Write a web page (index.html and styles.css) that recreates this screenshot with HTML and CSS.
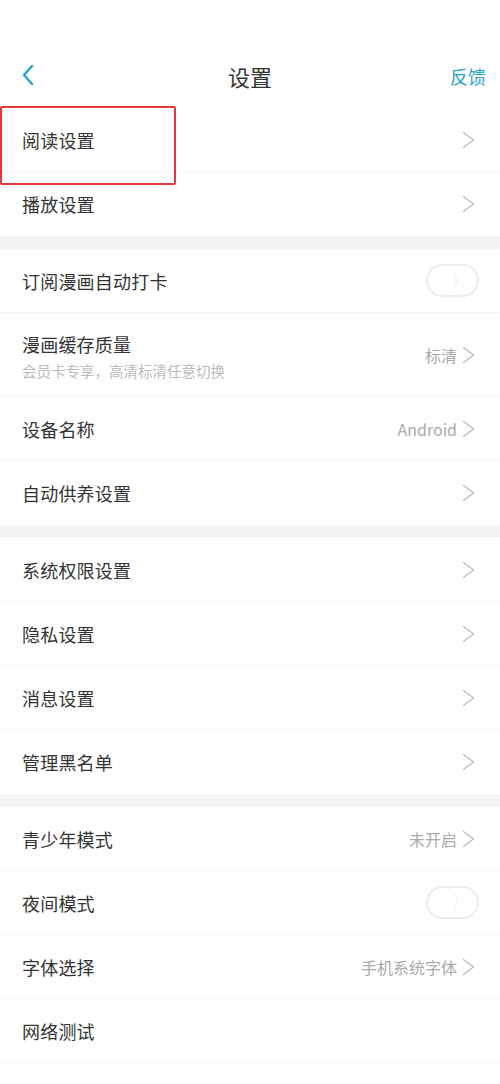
FILE: index.html
```html
<!DOCTYPE html>
<html lang="zh-CN">
<head>
    <meta charset="UTF-8">
    <meta name="viewport" content="width=device-width, initial-scale=1.0">
    <title>设置</title>
    <link rel="stylesheet" href="styles.css">
</head>
<body>
    <div class="page">
        <div class="status-bar"></div>

        <div class="header">
            <svg class="back" width="14" height="22" viewBox="0 0 14 22">
                <path d="M11 2 L3 11 L11 20" fill="none" stroke="#2aa3c4" stroke-width="2.4" stroke-linecap="round" stroke-linejoin="round"/>
            </svg>
            <div class="title">设置</div>
            <div class="feedback">反馈</div>
        </div>

        <div class="section">
            <div class="row">
                <div class="label">阅读设置</div>
                <div class="right"><svg class="arrow" viewBox="0 0 13 18"><path d="M1.5 1.5 L11.5 9 L1.5 16.5"/></svg></div>
                <div class="mark"></div>
            </div>
            <div class="row">
                <div class="label">播放设置</div>
                <div class="right"><svg class="arrow" viewBox="0 0 13 18"><path d="M1.5 1.5 L11.5 9 L1.5 16.5"/></svg></div>
            </div>
        </div>

        <div class="gap"></div>

        <div class="section">
            <div class="row">
                <div class="label">订阅漫画自动打卡</div>
                <div class="switch"><span class="knob"></span></div>
            </div>
            <div class="row tall">
                <div class="text">
                    <div class="label">漫画缓存质量</div>
                    <div class="sub">会员卡专享，高清标清任意切换</div>
                </div>
                <div class="right"><span class="value">标清</span><svg class="arrow" viewBox="0 0 13 18"><path d="M1.5 1.5 L11.5 9 L1.5 16.5"/></svg></div>
            </div>
            <div class="row">
                <div class="label">设备名称</div>
                <div class="right"><span class="value">Android</span><svg class="arrow" viewBox="0 0 13 18"><path d="M1.5 1.5 L11.5 9 L1.5 16.5"/></svg></div>
            </div>
            <div class="row">
                <div class="label">自动供养设置</div>
                <div class="right"><svg class="arrow" viewBox="0 0 13 18"><path d="M1.5 1.5 L11.5 9 L1.5 16.5"/></svg></div>
            </div>
        </div>

        <div class="gap"></div>

        <div class="section">
            <div class="row">
                <div class="label">系统权限设置</div>
                <div class="right"><svg class="arrow" viewBox="0 0 13 18"><path d="M1.5 1.5 L11.5 9 L1.5 16.5"/></svg></div>
            </div>
            <div class="row">
                <div class="label">隐私设置</div>
                <div class="right"><svg class="arrow" viewBox="0 0 13 18"><path d="M1.5 1.5 L11.5 9 L1.5 16.5"/></svg></div>
            </div>
            <div class="row">
                <div class="label">消息设置</div>
                <div class="right"><svg class="arrow" viewBox="0 0 13 18"><path d="M1.5 1.5 L11.5 9 L1.5 16.5"/></svg></div>
            </div>
            <div class="row">
                <div class="label">管理黑名单</div>
                <div class="right"><svg class="arrow" viewBox="0 0 13 18"><path d="M1.5 1.5 L11.5 9 L1.5 16.5"/></svg></div>
            </div>
        </div>

        <div class="gap"></div>

        <div class="section">
            <div class="row">
                <div class="label">青少年模式</div>
                <div class="right"><span class="value">未开启</span><svg class="arrow" viewBox="0 0 13 18"><path d="M1.5 1.5 L11.5 9 L1.5 16.5"/></svg></div>
            </div>
            <div class="row">
                <div class="label">夜间模式</div>
                <div class="switch"><span class="knob"></span></div>
            </div>
            <div class="row">
                <div class="label">字体选择</div>
                <div class="right"><span class="value">手机系统字体</span><svg class="arrow" viewBox="0 0 13 18"><path d="M1.5 1.5 L11.5 9 L1.5 16.5"/></svg></div>
            </div>
            <div class="row last">
                <div class="label">网络测试</div>
            </div>
        </div>
    </div>
</body>
</html>
```

FILE: styles.css
```css
body {
    margin: 0;
    background: #fff;
    font-family: "Noto Sans CJK SC", "Noto Sans", sans-serif;
    color: #333;
}
.page {
    width: 500px;
}
.status-bar {
    height: 44px;
}
.header {
    height: 64px;
    display: flex;
    align-items: center;
    justify-content: space-between;
    padding: 0 14px 0 21px;
    position: relative;
}
.back {
    display: block;
    margin-top: -2px;
}
.title {
    position: absolute;
    left: 0;
    right: 0;
    text-align: center;
    font-size: 22px;
    color: #333;
    pointer-events: none;
}
.feedback {
    font-size: 18px;
    color: #2aa3c4;
}
.gap {
    height: 13px;
    background: #f4f4f4;
}
.row {
    height: 64px;
    display: flex;
    align-items: center;
    justify-content: space-between;
    padding: 0 25px 0 22px;
    border-bottom: 1px solid #f5f5f5;
    box-sizing: border-box;
    position: relative;
}
.row:last-child {
    border-bottom: none;
}
.row.tall {
    height: 84px;
}
.row.last {
    border-bottom: 1px solid #f6f6f6;
}
.label {
    font-size: 18px;
    color: #333;
    letter-spacing: 0.2px;
}
.text .label {
    margin-top: 2px;
}
.sub {
    font-size: 14.5px;
    color: #bbb;
    margin-top: 3px;
}
.right {
    display: flex;
    align-items: center;
    gap: 5px;
}
.value {
    font-size: 16px;
    color: #aaa;
}
.arrow {
    display: block;
    width: 13px;
    height: 18px;
}
.arrow path {
    fill: none;
    stroke: #bbb;
    stroke-width: 1.4;
    stroke-linecap: round;
    stroke-linejoin: round;
}
.switch {
    width: 53px;
    height: 33px;
    border: 2px solid #ececec;
    border-radius: 18px;
    margin-right: -4px;
    position: relative;
    box-sizing: border-box;
}
.knob {
    position: absolute;
    left: 0;
    top: 0;
    width: 29px;
    height: 29px;
    border-radius: 50%;
    border-right: 1.5px solid #f0f0f0;
    box-sizing: border-box;
}
.mark {
    position: absolute;
    left: 0;
    top: -2px;
    width: 176px;
    height: 79px;
    border: 2px solid #e23b3b;
    border-radius: 2px;
    box-sizing: border-box;
}
```
